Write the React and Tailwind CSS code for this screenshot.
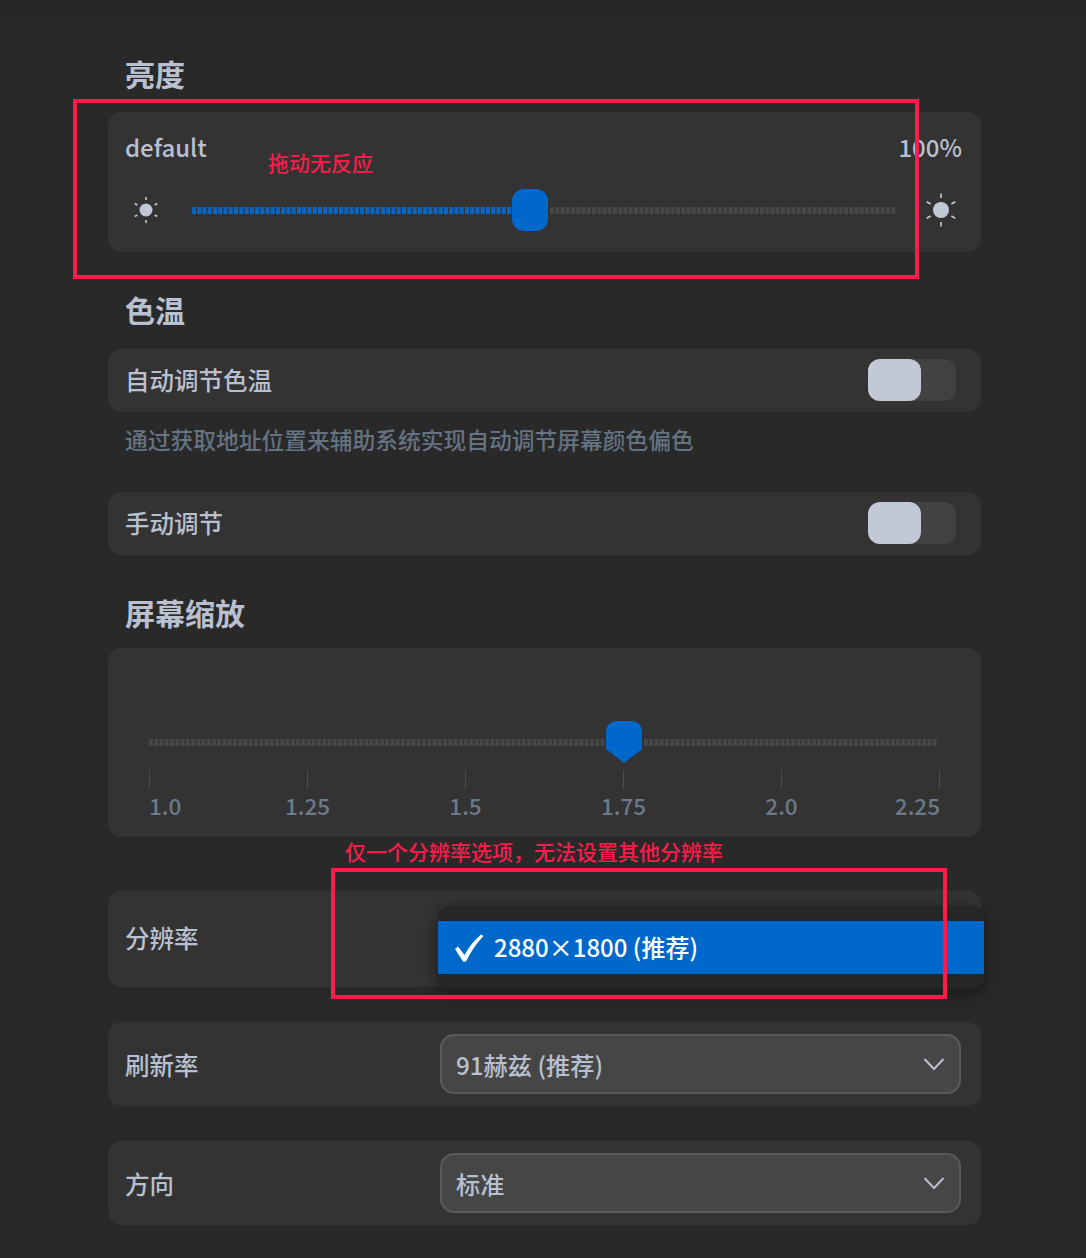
const FONT = "font-['Noto_Sans_CJK_SC','Noto_Sans',sans-serif]";

function Sun({ big }) {
  const r = big ? 8 : 6.5;
  const a = big ? 12 : 10;
  const b = big ? 16.5 : 13;
  const rays = [0, 60, 120, 180, 240, 300];
  return (
    <svg width="36" height="36" viewBox="-18 -18 36 36" className="shrink-0">
      <circle r={r} fill="#c3c8d6" />
      {rays.map(deg => (
        <line key={deg} x1="0" y1={-a} x2="0" y2={-b} stroke="#c3c8d6" strokeWidth="1.6" transform={`rotate(${deg})`} />
      ))}
    </svg>
  );
}

// segmented slider track
function Dots({ count, on }) {
  const width = count * 5.25;
  return (
    <svg width={width} height="7" viewBox={`0 0 ${width} 7`} className="shrink-0">
      {Array.from({ length: count }, (_, i) => (
        <rect key={i} x={i * 5.25} y="0" width="4" height="7" fill={on ? '#0a66c2' : '#474747'} />
      ))}
    </svg>
  );
}

function Heading({ children, className }) {
  return <h2 className={`pl-[17px] text-[30px] leading-[40px] font-bold text-[#b9c0d0] ${className}`}>{children}</h2>;
}

function Toggle() {
  return (
    <div className="w-[88px] h-[42px] mb-[2px] rounded-[12px] bg-[#424242]">
      <div className="w-[53px] h-[42px] rounded-[12px] bg-[#c3c8d6]" />
    </div>
  );
}

function ToggleRow({ label, className }) {
  return (
    <div className={`h-[63px] rounded-[14px] bg-[#333333] pl-[17px] pr-[25px] flex items-center justify-between ${className}`}>
      <span className="text-[24.5px] font-medium text-[#b9c0d0]">{label}</span>
      <Toggle />
    </div>
  );
}

function SelectRow({ label, value, className }) {
  return (
    <div className={`h-[84px] rounded-[14px] bg-[#333333] pl-[17px] pr-[20px] flex items-center ${className}`}>
      <span className="w-[315px] pt-[2px] text-[24.5px] font-medium text-[#b9c0d0]">{label}</span>
      <div className="flex-1 h-[60px] rounded-[14px] border-2 border-[#5a5a5a] bg-[#464646] pl-[14px] pr-[14px] flex items-center justify-between">
        <span className="pt-[2px] text-[24.2px] font-medium text-[#b9c0d0]">{value}</span>
        <svg width="22" height="14" viewBox="0 0 22 14" fill="none" stroke="#b9c0d0" strokeWidth="2">
          <path d="M1.5 2 L11 12 L20.5 2" />
        </svg>
      </div>
    </div>
  );
}

const scales = ['1.0', '1.25', '1.5', '1.75', '2.0', '2.25'];

export default function App() {
  return (
    <div className={`relative w-full h-[1258px] overflow-hidden bg-[#292929] ${FONT}`}>
      <div className="h-[15px] bg-[#262626]" />

      <div className="px-[108px] w-[981px] box-content">
        <div className="w-[873px]">
          <Heading className="mt-[38px]">亮度</Heading>

          <div className="mt-[19px] h-[140px] rounded-[14px] bg-[#333333] pl-[17px] pr-[19px] pt-[17px]">
            <div className="flex justify-between items-center h-[36px] text-[24px] font-medium text-[#b9c0d0]">
              <span>default</span>
              <span>100%</span>
            </div>
            <div className="mt-[24px] h-[42px] flex items-center">
              <div className="ml-[3px]"><Sun /></div>
              <div className="ml-[28px] flex items-center h-[42px]">
                <Dots count={61} on />
                <div className="w-[36px] h-[42px] rounded-[12px] bg-[#0068cb] shrink-0" />
                <div className="ml-[2px]"><Dots count={66} /></div>
              </div>
              <div className="ml-auto mr-[3px]"><Sun big /></div>
            </div>
          </div>

          <Heading className="mt-[37px]">色温</Heading>
          <ToggleRow label="自动调节色温" className="mt-[20px]" />
          <p className="mt-[12px] pl-[17px] h-[32px] leading-[32px] text-[22.75px] font-medium text-[#657382]">通过获取地址位置来辅助系统实现自动调节屏幕颜色偏色</p>
          <ToggleRow label="手动调节" className="mt-[36px]" />

          <Heading className="mt-[37px]">屏幕缩放</Heading>

          <div className="mt-[16px] h-[189px] rounded-[14px] bg-[#333333] pl-[41px] pr-[41px] pt-[73px]">
            <div className="flex items-center h-[42px]">
              <Dots count={87} />
              <svg width="36" height="42" viewBox="0 0 36 42" className="shrink-0 ml-[0.25px]">
                <path d="M12 0 H24 Q36 0 36 12 V28 L18 42 L0 28 V12 Q0 0 12 0 Z" fill="#0068cb" />
              </svg>
              <div className="ml-[2px]"><Dots count={56} /></div>
            </div>
            <div className="mt-[7px] flex justify-between">
              {scales.map(s => <div key={s} className="w-px h-[19px] bg-[#4d4d4d]" />)}
            </div>
            <div className="flex justify-between text-[22.5px] font-medium text-[#6b7a8a]">
              {scales.map((s, i) => (
                <div key={s} className={`w-px flex whitespace-nowrap ${i === 0 ? 'justify-start' : i === 5 ? 'justify-end' : 'justify-center'}`}>{s}</div>
              ))}
            </div>
          </div>

          <div className="relative mt-[53px] h-[97px] rounded-[14px] bg-[#333333] pl-[17px] pb-[1px] flex items-center">
            <span className="text-[24.5px] font-medium text-[#b9c0d0]">分辨率</span>
            {/* open dropdown hangs past the card's right edge */}
            <div className="absolute left-[330px] top-[16px] w-[546px] h-[83px] rounded-[12px] bg-[#262626] shadow-[0_4px_16px_rgba(0,0,0,0.45)] flex items-center">
              <div className="w-full h-[53px] bg-[#0068cb] pl-[16px] pb-[2px] flex items-center text-[24px] font-medium text-white">
                <svg width="30" height="28" viewBox="0 0 30 28" className="shrink-0 mt-[2px]">
                  <path d="M1 15 L4 12.5 L10.5 21 Q17 9 27 0.5 L29.5 2 Q19 13 12 27.5 L9 27.5 Z" fill="#ffffff" />
                </svg>
                <span className="ml-[10px]">2880×1800 (推荐)</span>
              </div>
            </div>
          </div>

          <SelectRow label="刷新率" value="91赫兹 (推荐)" className="mt-[35px]" />
          <SelectRow label="方向" value="标准" className="mt-[35px]" />
        </div>
      </div>

      {/* red annotations drawn over the screenshot */}
      <div className="absolute left-[73px] top-[99px] w-[846px] h-[180px] border-[4px] border-[#fb1c4b]" />
      <div className="absolute left-[268px] top-[147px] text-[21px] leading-[30px] font-medium text-[#fb1c4b]">拖动无反应</div>
      <div className="absolute left-[331px] top-[868px] w-[616px] h-[131px] border-[4px] border-[#fb1c4b]" />
      <div className="absolute left-[345px] top-[836px] text-[21px] leading-[30px] font-medium text-[#fb1c4b] whitespace-nowrap">仅一个分辨率选项，无法设置其他分辨率</div>
    </div>
  );
}
